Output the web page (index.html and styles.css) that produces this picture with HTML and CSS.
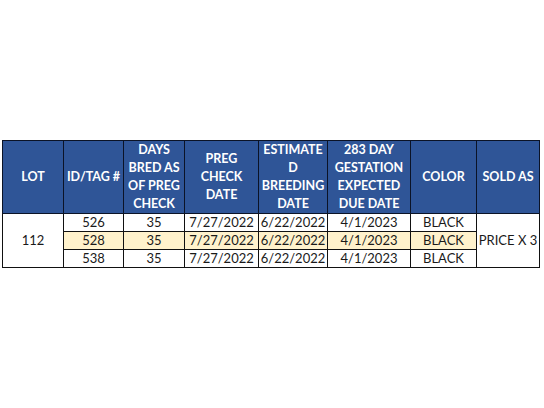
FILE: index.html
```html
<!DOCTYPE html>
<html>
<head>
<meta charset="utf-8">
<link rel="stylesheet" href="styles.css">
</head>
<body>
<table class="sheet">
  <colgroup>
    <col class="c1"><col class="c2"><col class="c3"><col class="c4"><col class="c5"><col class="c6"><col class="c7"><col class="c8">
  </colgroup>
  <thead>
    <tr>
      <th>LOT</th>
      <th>ID/TAG #</th>
      <th>DAYS<br>BRED AS<br>OF PREG<br>CHECK</th>
      <th>PREG<br>CHECK<br>DATE</th>
      <th>ESTIMATE<br>D<br>BREEDING<br>DATE</th>
      <th>283 DAY<br>GESTATION<br>EXPECTED<br>DUE DATE</th>
      <th>COLOR</th>
      <th>SOLD AS</th>
    </tr>
  </thead>
  <tbody>
    <tr>
      <td rowspan="3">112</td>
      <td>526</td><td>35</td><td>7/27/2022</td><td>6/22/2022</td><td>4/1/2023</td><td>BLACK</td>
      <td rowspan="3">PRICE X 3</td>
    </tr>
    <tr class="hl">
      <td>528</td><td>35</td><td>7/27/2022</td><td>6/22/2022</td><td>4/1/2023</td><td>BLACK</td>
    </tr>
    <tr>
      <td>538</td><td>35</td><td>7/27/2022</td><td>6/22/2022</td><td>4/1/2023</td><td>BLACK</td>
    </tr>
  </tbody>
</table>
</body>
</html>
```
FILE: styles.css
```css
html, body {
  background: #ffffff;
}
body {
  margin: 140px 0 0 2px;
  font-family: Lato, "Liberation Sans", sans-serif;
}
.sheet {
  border-collapse: collapse;
  table-layout: fixed;
  width: 537px;
}
.c1 { width: 61px; }
.c2 { width: 60px; }
.c3 { width: 61px; }
.c4 { width: 74px; }
.c5 { width: 69px; }
.c6 { width: 83px; }
.c7 { width: 66px; }
.c8 { width: 63px; }
.sheet th {
  background: #2f5597;
  color: #ffffff;
  font-weight: 700;
  font-size: 12.5px;
  line-height: 18px;
  height: 71px;
  padding: 0;
  border: 1px solid #0b1326;
  text-align: center;
  vertical-align: middle;
  white-space: nowrap;
  overflow: hidden;
}
.sheet td {
  font-size: 13px;
  line-height: 17px;
  height: 17px;
  padding: 0;
  border: 1px solid #111111;
  text-align: center;
  vertical-align: middle;
  color: #1a1a1a;
  white-space: nowrap;
  background: #ffffff;
}
.sheet tr.hl td {
  background: #fff2cc;
}
```
